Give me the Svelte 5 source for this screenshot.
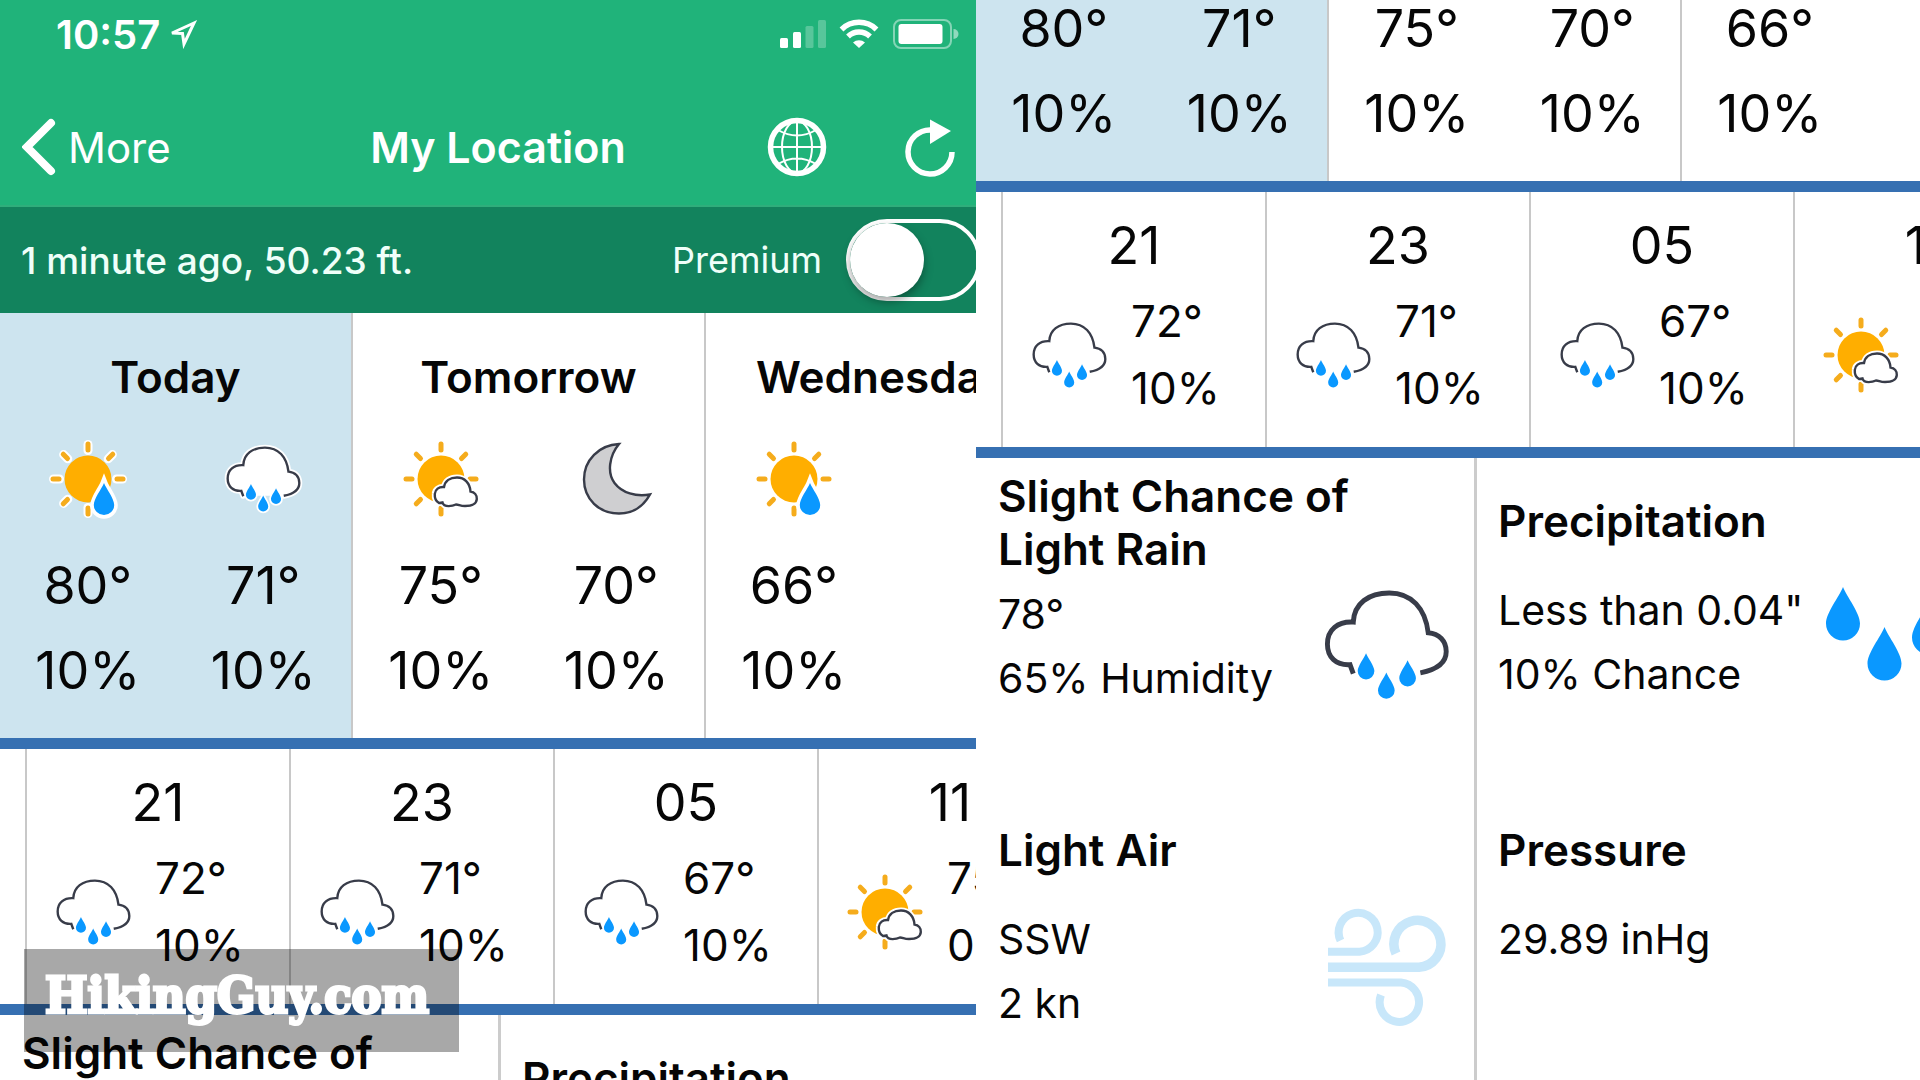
<script>
	let premium = $state(false);

	const days = [
		{ name: 'Today', today: true, parts: [
			{ icon: 'sunDrop', temp: 80, chance: 10 },
			{ icon: 'rain', temp: 71, chance: 10 }
		] },
		{ name: 'Tomorrow', parts: [
			{ icon: 'sunCloud', temp: 75, chance: 10 },
			{ icon: 'moon', temp: 70, chance: 10 }
		] },
		{ name: 'Wednesday', parts: [
			{ icon: 'sunDrop', temp: 66, chance: 10 }
		] }
	];

	const hours = [
		{ hour: '21', icon: 'rain', temp: 72, chance: 10 },
		{ hour: '23', icon: 'rain', temp: 71, chance: 10 },
		{ hour: '05', icon: 'rain', temp: 67, chance: 10 },
		{ hour: '11', icon: 'sunCloud', temp: 75, chance: 0 }
	];

	const details = [
		{ title: 'Slight Chance of Light Rain', lines: ['78°', '65% Humidity'], icon: 'rain' },
		{ title: 'Precipitation', lines: ['Less than 0.04"', '10% Chance'], icon: 'drops' },
		{ title: 'Light Air', lines: ['SSW', '2 kn'], icon: 'wind' },
		{ title: 'Pressure', lines: ['29.89 inHg'] }
	];

	// start a pane scrolled down by the given amount
	const scrolledTo = (node, top) => {
		node.scrollTop = top;
	}
</script>

{#snippet drop(x, y, scale)}
	<path
		class="drop"
		transform="translate({x} {y}) scale({scale})"
		d="M0 0C4 10 17 26 17 36.5A17 17 0 0 1-17 36.5C-17 26-4 10 0 0Z"
	/>
{/snippet}

{#snippet sun(angles)}
	<g class="halo">
		{#each angles as angle}
			<path d="M38 3.5V9.5" transform="rotate({angle} 38 38)" />
		{/each}
	</g>
	<g class="rays">
		{#each angles as angle}
			<path d="M38 3V9" transform="rotate({angle} 38 38)" />
		{/each}
	</g>
	<circle class="sun" cx="38" cy="38" r="23.5" />
{/snippet}

{#snippet icon(name)}
	{#if name === 'drops' || name === 'wind'}
		<svg class="icon" viewBox="0 0 126 126" aria-hidden="true">
			{#if name === 'drops'}
				{@render drop(20, 9, 1)}
				{@render drop(61.5, 49, 1)}
				{@render drop(106, 23, 1)}
			{:else}
				<g class="wind">
					<path stroke-width="8" d="M17.5 33.5A19.5 19.5 0 1 1 36.5 44.7H5" />
					<path stroke-width="9.5" d="M73 46.5A23.5 23.5 0 1 1 96 60.3H5" />
					<path stroke-width="8" d="M5 75.5H78A19.7 19.7 0 1 1 58 88" />
				</g>
			{/if}
		</svg>
	{:else if name === 'rain'}
		<svg class="icon" viewBox="-1 0 77 77" aria-hidden="true">
			<path class="halo filled" d="M17.5 55.5L15.5 50.5C7 51 1.7 46 1.7 38 1.7 29 8 24 17.5 24.5 18 13 27 6.7 39.5 6.7 53 6.7 61.5 16 63.3 31 70 31.5 74.3 36 74.3 42.5 74.3 49 69 53.5 58.5 55.5" />
			<g class="halo">
				{@render drop(25.3, 43.5, 0.3)}
				{@render drop(37.7, 55.3, 0.3)}
				{@render drop(50.7, 47.8, 0.3)}
			</g>
			<path class="outline" d="M17.5 56L15.5 50.5C7 51 1.7 46 1.7 38 1.7 29 8 24 17.5 24.5 18 13 27 6.7 39.5 6.7 53 6.7 61.5 16 63.3 31 70 31.5 74.3 36 74.3 42.5 74.3 49 69 53.5 58.5 55.5" />
			{@render drop(25.3, 43.5, 0.3)}
			{@render drop(37.7, 55.3, 0.3)}
			{@render drop(50.7, 47.8, 0.3)}
		</svg>
	{:else}
		<svg class="icon" viewBox="0 0 76 76" aria-hidden="true">
			{#if name === 'sunDrop'}
				{@render sun([0, 45, 90, 180, 225, 270, 315])}
				<g class="edge">{@render drop(54, 42, 0.6)}</g>
				{@render drop(54, 42, 0.6)}
			{:else if name === 'sunCloud'}
				{@render sun([0, 45, 90, 180, 225, 270, 315])}
				<path class="edge" d="M36 62C32.5 60 31.5 57 31.8 53 32 48.5 36 45.5 41 46 42 40 47 36.5 54 36.5 61.5 36.5 67 42 67.5 50.5 71.5 51 74 54 73.8 58 73.5 62.5 69 65 62 65 57 65 56 63.5 53 63.5 50 65 41 67 39.5 61.5 38 62 37 62 36 62Z" />
				<path class="outline small-cloud" d="M36 62C32.5 60 31.5 57 31.8 53 32 48.5 36 45.5 41 46 42 40 47 36.5 54 36.5 61.5 36.5 67 42 67.5 50.5 71.5 51 74 54 73.8 58 73.5 62.5 69 65 62 65 57 65 56 63.5 53 63.5 50 65 41 67 39.5 61.5 38 62 37 62 36 62Z" />
			{:else if name === 'moon'}
				<path class="outline moon" d="M41 3C31 15 29 32 36.5 42 44 52 58 56 72 53.5 65 66 54 72.5 41 72.5 21 72.5 6 58 6 38.5 6 19 21 4 41 3Z" />
			{/if}
		</svg>
	{/if}
{/snippet}

{#snippet forecast()}
	<section class="days">
		{#each days as day}
			<article class="day" class:today={day.today}>
				<h2>{day.name}</h2>
				<div class="parts">
					{#each day.parts as part}
						<div class="part">
							{@render icon(part.icon)}
							<p>{part.temp}°</p>
							<p>{part.chance}%</p>
						</div>
					{/each}
				</div>
			</article>
		{/each}
	</section>

	<section class="hours">
		{#each hours as item}
			<article class="hour">
				<h3>{item.hour}</h3>
				<div class="reading">
					{@render icon(item.icon)}
					<div>
						<p>{item.temp}°</p>
						<p>{item.chance}%</p>
					</div>
				</div>
			</article>
		{/each}
	</section>

	<section class="details">
		{#each details as detail}
			<article class="detail">
				<h2>{detail.title}</h2>
				<div class="values">
					<div>
						{#each detail.lines as line}
							<p>{line}</p>
						{/each}
					</div>
					{#if detail.icon}
						{@render icon(detail.icon)}
					{/if}
				</div>
			</article>
		{/each}
	</section>
{/snippet}

<main>
	<div class="pane">
		<div class="screen">
			<header>
				<div class="status">
					<span class="time">10:57</span>
					<svg class="arrow" width="30" height="30" viewBox="0 0 30 30" aria-hidden="true">
						<path d="M4 14L26 4 16 25 14.5 14.5Z" />
					</svg>
					<svg class="signals" width="180" height="30" viewBox="0 0 180 30" aria-hidden="true">
						<rect x="1" y="19" width="8" height="10" rx="1.5" />
						<rect x="14" y="13" width="8" height="16" rx="1.5" />
						<rect x="26.5" y="7" width="8" height="22" rx="1.5" opacity=".25" />
						<rect x="39" y="1" width="8" height="28" rx="1.5" opacity=".25" />
						<g fill="none" stroke="#fff" stroke-width="5.5">
							<path d="M62.5 10.5a25 25 0 0 1 35 0" />
							<path d="M69 17.5a16 16 0 0 1 22 0" />
						</g>
						<path d="M80 29l-6-5.5a9 9 0 0 1 12 0z" />
						<rect x="115" y="1" width="57" height="28" rx="7" fill="none" stroke="#fff" stroke-width="2" opacity=".45" />
						<rect x="119.5" y="5" width="44" height="20" rx="3" />
						<path d="M174.5 10a5 5 0 0 1 0 10z" opacity=".5" />
					</svg>
				</div>
				<nav>
					<button class="back">
						<svg width="34" height="58" viewBox="0 0 34 58" aria-hidden="true">
							<path d="M29 5L5 29 29 53" />
						</svg>
						More
					</button>
					<h1>My Location</h1>
					<div class="actions">
						<button aria-label="Map">
							<svg width="60" height="60" viewBox="0 0 60 60" aria-hidden="true">
								<circle cx="30" cy="30" r="26.5" stroke-width="5.5" />
								<ellipse cx="30" cy="30" rx="15" ry="26" />
								<path d="M30 4V56M4 30H56M11 13Q30 24 49 13M11 47Q30 36 49 47" />
							</svg>
						</button>
						<button aria-label="Refresh">
							<svg width="50" height="60" viewBox="0 0 50 60" aria-hidden="true">
								<path stroke-width="5.5" d="M26 13A22 22 0 1 0 47 35" />
								<path class="head" d="M25 2.5L46 14 25 27Z" />
							</svg>
						</button>
					</div>
				</nav>
			</header>
			<div class="updated">
				<span>1 minute ago, 50.23 ft.</span>
				<label>
					Premium
					<input type="checkbox" bind:checked={premium} />
				</label>
			</div>
			{@render forecast()}
		</div>
	</div>

	<div class="pane" use:scrolledTo={244}>
		<div class="screen">
			{@render forecast()}
		</div>
	</div>

	<div class="watermark">HikingGuy.com</div>
</main>

<style>
	:global(body) {
		margin: 0;
		overflow: hidden;
		background: #fff;
	}

	main {
		display: grid;
		grid-template-columns: 976fr 944fr;
		height: 100vh;
		position: relative;
		font-family: Inter, "Liberation Sans", sans-serif;
		color: #060606;
	}

	.pane {
		min-width: 0;
		overflow: hidden;
	}

	/* the screen is a little wider than its pane and gets cut on the right */
	.screen {
		min-width: 996px;
	}

	h1, h2, h3, p {
		margin: 0;
	}

	button {
		display: flex;
		align-items: center;
		padding: 0;
		border: none;
		background: none;
		color: inherit;
		font: inherit;
		cursor: pointer;
	}

	header {
		background: #20b37a;
		color: #fff;
		border-bottom: 2px solid #2fae7b;
	}

	.status {
		display: flex;
		align-items: center;
		height: 68px;
		padding: 0 37px 0 56px;
		margin-bottom: 21px;
	}

	.time {
		font-size: 40px;
		font-weight: 600;
	}

	.arrow {
		margin-left: 8px;
		fill: none;
		stroke: #fff;
		stroke-width: 3;
	}

	.signals {
		margin-left: auto;
		fill: #fff;
	}

	nav {
		display: grid;
		grid-template-columns: 1fr auto 1fr;
		align-items: center;
		height: 116px;
		padding: 0 22px;
	}

	nav svg {
		fill: none;
		stroke: #fff;
		stroke-width: 2;
	}

	h1 {
		font-size: 43px;
		font-weight: 600;
	}

	.back {
		gap: 12px;
		font-size: 42px;
		font-weight: 400;
	}

	.back svg {
		stroke-width: 8;
		stroke-linecap: round;
	}

	.actions {
		display: flex;
		justify-content: flex-end;
		gap: 78px;
		margin-right: 19px;
	}

	nav .head {
		fill: #fff;
		stroke: none;
	}

	.updated {
		display: flex;
		align-items: center;
		justify-content: space-between;
		height: 106px;
		padding: 0 15px 0 21px;
		background: #12835d;
		color: #effff9;
		font-size: 37px;
		font-weight: 500;
	}

	label {
		display: flex;
		align-items: center;
		gap: 24px;
		font-size: 36px;
		font-weight: 400;
	}

	input {
		appearance: none;
		box-sizing: border-box;
		width: 135px;
		height: 82px;
		margin: 0;
		border: 4px solid #fff;
		border-radius: 41px;
		cursor: pointer;
	}

	input::before {
		content: "";
		display: block;
		width: 74px;
		height: 74px;
		border-radius: 50%;
		background: #fff;
		box-shadow: 0 5px 10px rgba(0, 0, 0, 0.35);
	}

	input:checked::before {
		margin-left: auto;
	}

	h2 {
		font-size: 44px;
		font-weight: 600;
		line-height: 53px;
	}

	.days, .hours {
		display: flex;
		overflow: hidden;
		border-bottom: 11px solid #3670b2;
	}

	.day {
		box-sizing: border-box;
		flex: 0 0 353px;
		padding: 38px 0 25px;
		border-right: 2px solid #c8c8c8;
		text-align: center;
	}

	.today {
		background: #cde4ef;
	}

	.parts {
		display: grid;
		grid-template-columns: 1fr 1fr;
		margin-top: 37px;
	}

	.part .icon {
		margin-bottom: 26px;
	}

	.part p {
		font-size: 52px;
		line-height: 85px;
	}

	.icon {
		display: inline-block;
		flex: none;
		width: 76px;
		height: 76px;
		vertical-align: top;
		overflow: visible;
	}

	.hours {
		padding-left: 25px;
	}

	.hour {
		box-sizing: border-box;
		flex: 0 0 264px;
		padding: 22px 0 25px;
		border-left: 2px solid #c8c8c8;
	}

	h3 {
		font-size: 52px;
		font-weight: 400;
		line-height: 64px;
		text-align: center;
	}

	.reading {
		display: flex;
		align-items: center;
		gap: 24px;
		margin-top: 10px;
		padding-left: 28px;
	}

	.reading p {
		font-size: 44px;
		line-height: 67px;
	}

	.details {
		display: grid;
		grid-template-columns: 1fr 1fr;
	}

	.detail {
		box-sizing: border-box;
		min-height: 329px;
		padding: 12px 25px 0 22px;
	}

	.detail:nth-child(even) {
		border-left: 3px solid #ccc;
		padding: 12px 23px 0 21px;
	}

	.detail h2 {
		display: flex;
		align-items: center;
		min-height: 102px;
		margin-bottom: 6px;
	}

	.values {
		display: flex;
		justify-content: space-between;
	}

	.values p {
		font-size: 41px;
		line-height: 64px;
		white-space: nowrap;
	}

	.values .icon {
		width: 126px;
		height: 126px;
	}

	.drop {
		fill: #0a98ff;
	}

	.sun {
		fill: #ffae00;
	}

	.rays {
		stroke: #f5ac1c;
		stroke-width: 5;
		stroke-linecap: round;
	}

	.halo {
		fill: none;
		stroke: #fff;
		stroke-width: 9;
		stroke-linecap: round;
		stroke-linejoin: round;
	}

	.filled {
		fill: #fff;
		stroke-width: 6;
	}

	.halo .drop, .edge .drop {
		fill: #fff;
		stroke: #fff;
		stroke-width: 12;
	}

	.edge {
		fill: #fff;
		stroke: #fff;
		stroke-width: 6;
	}

	.outline {
		fill: none;
		stroke: #383c49;
		stroke-width: 2.4;
	}

	.values .outline {
		stroke-width: 3;
	}

	.small-cloud {
		fill: #fff;
	}

	.moon {
		fill: #cfcfd1;
	}

	.wind {
		fill: none;
		stroke: #c8e7fa;
	}

	.watermark {
		position: absolute;
		left: 24px;
		bottom: 28px;
		box-sizing: border-box;
		padding: 0 30px 10px 21px;
		background: rgba(0, 0, 0, 0.34);
		color: #fff;
		font-family: "DejaVu Serif Condensed", "DejaVu Serif", serif;
		font-size: 50px;
		font-weight: 700;
		line-height: 93px;
		-webkit-text-stroke: 3px #fff;
	}
</style>
